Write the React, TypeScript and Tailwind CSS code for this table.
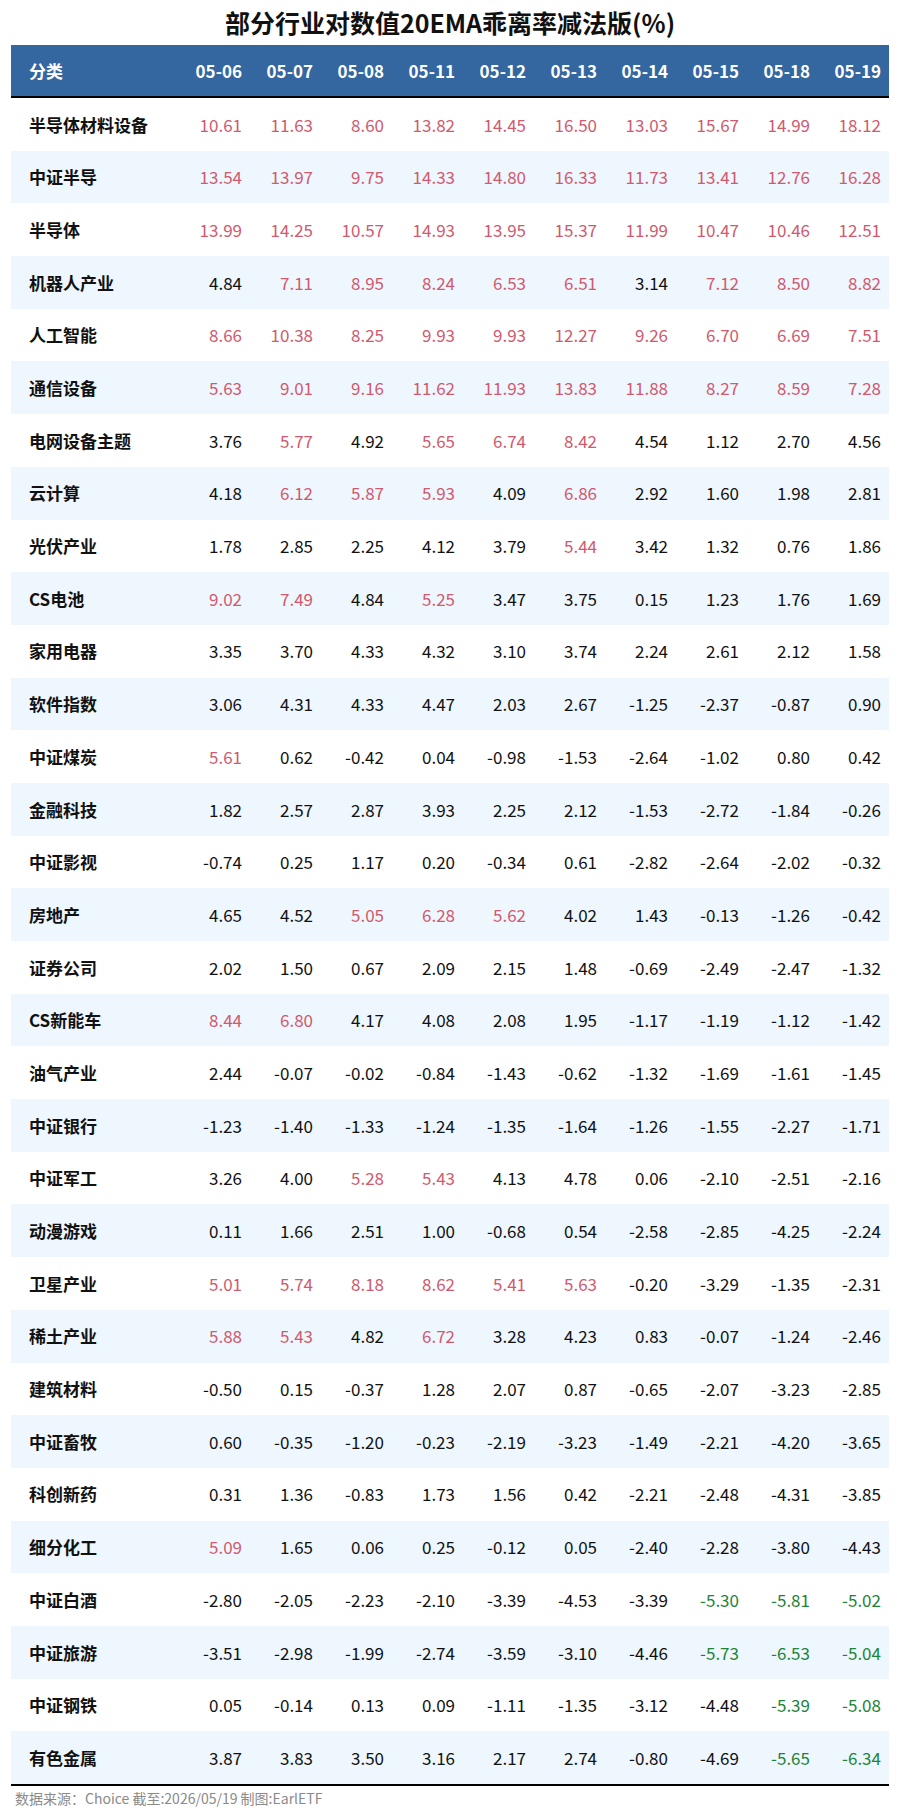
const dates = ["05-06", "05-07", "05-08", "05-11", "05-12", "05-13", "05-14", "05-15", "05-18", "05-19"];

const rows: [string, number[]][] = [
  ["半导体材料设备", [10.61, 11.63, 8.6, 13.82, 14.45, 16.5, 13.03, 15.67, 14.99, 18.12]],
  ["中证半导", [13.54, 13.97, 9.75, 14.33, 14.8, 16.33, 11.73, 13.41, 12.76, 16.28]],
  ["半导体", [13.99, 14.25, 10.57, 14.93, 13.95, 15.37, 11.99, 10.47, 10.46, 12.51]],
  ["机器人产业", [4.84, 7.11, 8.95, 8.24, 6.53, 6.51, 3.14, 7.12, 8.5, 8.82]],
  ["人工智能", [8.66, 10.38, 8.25, 9.93, 9.93, 12.27, 9.26, 6.7, 6.69, 7.51]],
  ["通信设备", [5.63, 9.01, 9.16, 11.62, 11.93, 13.83, 11.88, 8.27, 8.59, 7.28]],
  ["电网设备主题", [3.76, 5.77, 4.92, 5.65, 6.74, 8.42, 4.54, 1.12, 2.7, 4.56]],
  ["云计算", [4.18, 6.12, 5.87, 5.93, 4.09, 6.86, 2.92, 1.6, 1.98, 2.81]],
  ["光伏产业", [1.78, 2.85, 2.25, 4.12, 3.79, 5.44, 3.42, 1.32, 0.76, 1.86]],
  ["CS电池", [9.02, 7.49, 4.84, 5.25, 3.47, 3.75, 0.15, 1.23, 1.76, 1.69]],
  ["家用电器", [3.35, 3.7, 4.33, 4.32, 3.1, 3.74, 2.24, 2.61, 2.12, 1.58]],
  ["软件指数", [3.06, 4.31, 4.33, 4.47, 2.03, 2.67, -1.25, -2.37, -0.87, 0.9]],
  ["中证煤炭", [5.61, 0.62, -0.42, 0.04, -0.98, -1.53, -2.64, -1.02, 0.8, 0.42]],
  ["金融科技", [1.82, 2.57, 2.87, 3.93, 2.25, 2.12, -1.53, -2.72, -1.84, -0.26]],
  ["中证影视", [-0.74, 0.25, 1.17, 0.2, -0.34, 0.61, -2.82, -2.64, -2.02, -0.32]],
  ["房地产", [4.65, 4.52, 5.05, 6.28, 5.62, 4.02, 1.43, -0.13, -1.26, -0.42]],
  ["证券公司", [2.02, 1.5, 0.67, 2.09, 2.15, 1.48, -0.69, -2.49, -2.47, -1.32]],
  ["CS新能车", [8.44, 6.8, 4.17, 4.08, 2.08, 1.95, -1.17, -1.19, -1.12, -1.42]],
  ["油气产业", [2.44, -0.07, -0.02, -0.84, -1.43, -0.62, -1.32, -1.69, -1.61, -1.45]],
  ["中证银行", [-1.23, -1.4, -1.33, -1.24, -1.35, -1.64, -1.26, -1.55, -2.27, -1.71]],
  ["中证军工", [3.26, 4.0, 5.28, 5.43, 4.13, 4.78, 0.06, -2.1, -2.51, -2.16]],
  ["动漫游戏", [0.11, 1.66, 2.51, 1.0, -0.68, 0.54, -2.58, -2.85, -4.25, -2.24]],
  ["卫星产业", [5.01, 5.74, 8.18, 8.62, 5.41, 5.63, -0.2, -3.29, -1.35, -2.31]],
  ["稀土产业", [5.88, 5.43, 4.82, 6.72, 3.28, 4.23, 0.83, -0.07, -1.24, -2.46]],
  ["建筑材料", [-0.5, 0.15, -0.37, 1.28, 2.07, 0.87, -0.65, -2.07, -3.23, -2.85]],
  ["中证畜牧", [0.6, -0.35, -1.2, -0.23, -2.19, -3.23, -1.49, -2.21, -4.2, -3.65]],
  ["科创新药", [0.31, 1.36, -0.83, 1.73, 1.56, 0.42, -2.21, -2.48, -4.31, -3.85]],
  ["细分化工", [5.09, 1.65, 0.06, 0.25, -0.12, 0.05, -2.4, -2.28, -3.8, -4.43]],
  ["中证白酒", [-2.8, -2.05, -2.23, -2.1, -3.39, -4.53, -3.39, -5.3, -5.81, -5.02]],
  ["中证旅游", [-3.51, -2.98, -1.99, -2.74, -3.59, -3.1, -4.46, -5.73, -6.53, -5.04]],
  ["中证钢铁", [0.05, -0.14, 0.13, 0.09, -1.11, -1.35, -3.12, -4.48, -5.39, -5.08]],
  ["有色金属", [3.87, 3.83, 3.5, 3.16, 2.17, 2.74, -0.8, -4.69, -5.65, -6.34]],
];

// >5 红, <-5 绿
function tone(v: number) {
  if (v > 5) return "text-[#d05a6e]";
  if (v < -5) return "text-[#1d8436]";
  return "text-[#111111]";
}

const cols = "grid grid-cols-[168px_repeat(10,71px)]";

export default function App() {
  return (
    <div className="w-[900px] h-[1813px] bg-white font-['Noto_Sans_CJK_SC',sans-serif]">
      <div className="h-[45px] flex items-center justify-center">
        <h1 className="text-[25px] font-bold text-[#111] leading-none">部分行业对数值20EMA乖离率减法版(%)</h1>
      </div>
      <div className="mx-[11px] border-b-2 border-black">
        <div className={`${cols} h-[53px] bg-[#3466a0] border-b-2 border-black text-white font-bold text-[17px]`}>
          <div className="flex items-center pl-[18px]">分类</div>
          {dates.map((d) => (
            <div key={d} className="flex items-center justify-end pr-[8px]">
              {d}
            </div>
          ))}
        </div>
        {rows.map(([name, vals], i) => (
          <div key={name} className={`${cols} h-[52.7px] text-[17px] ${i % 2 ? "bg-[#eef6fe]" : "bg-white"}`}>
            <div className="flex items-center pl-[18px] font-bold text-[#111]">{name}</div>
            {vals.map((v, j) => (
              <div key={j} className={`flex items-center justify-end pr-[8px] ${tone(v)}`}>
                {v.toFixed(2)}
              </div>
            ))}
          </div>
        ))}
      </div>
      <div className="pl-[15px] pt-[2px] text-[14px] text-[#8a8a8a]">数据来源：Choice 截至:2026/05/19 制图:EarlETF</div>
    </div>
  );
}
